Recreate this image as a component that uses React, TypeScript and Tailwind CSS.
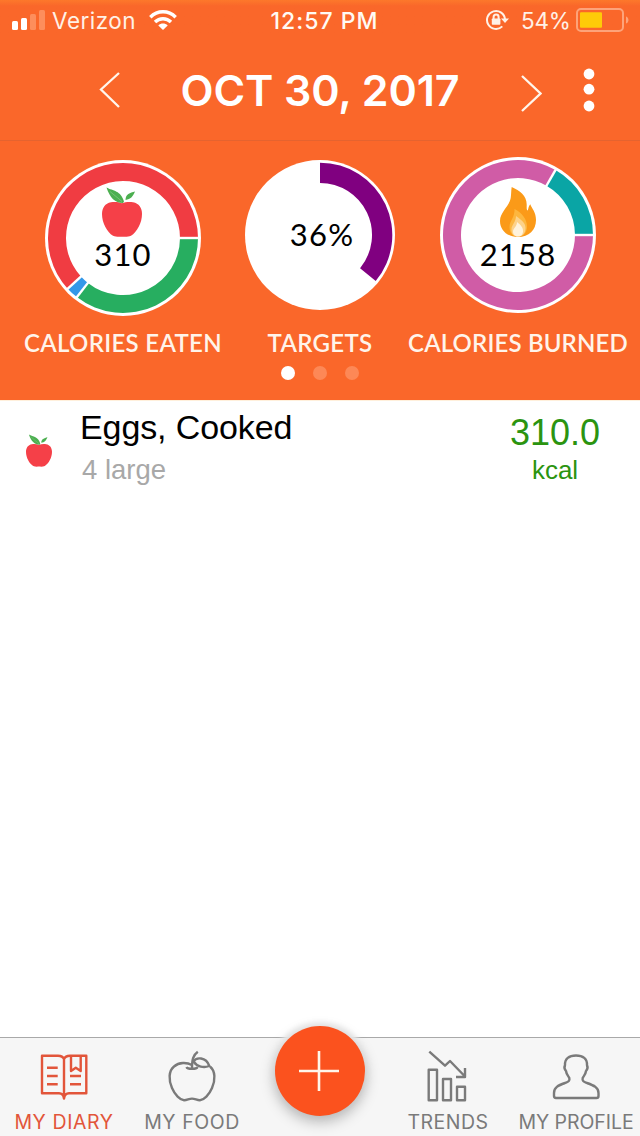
import type { ReactNode } from 'react';

type Segment = { from: number; to: number; color: string };

const eaten: Segment[] = [
  { from: 0, to: 128, color: '#27ae60' },
  { from: 128, to: 137.5, color: '#3498e8' },
  { from: 137.5, to: 360, color: '#f03c42' },
];

const burned: Segment[] = [
  { from: 0, to: 300, color: '#d05ca6' },
  { from: 300, to: 360, color: '#0aa5a5' },
];

const targets: Segment[] = [{ from: -90, to: 39.6, color: '#800080' }];

function point(c: number, r: number, deg: number) {
  const a = (deg * Math.PI) / 180;
  return `${c + r * Math.cos(a)} ${c + r * Math.sin(a)}`;
}

function Ring({ size, outer, inner, segments, gaps }: { size: number; outer: number; inner: number; segments: Segment[]; gaps?: boolean }) {
  const c = size / 2;
  return (
    <svg width={size} height={size} className="[grid-area:1/1]">
      <circle cx={c} cy={c} r={c} fill="#fff" />
      {segments.map((s) => {
        const large = s.to - s.from > 180 ? 1 : 0;
        return (
          <path
            key={s.from}
            fill={s.color}
            d={`M${point(c, outer, s.from)} A${outer} ${outer} 0 ${large} 1 ${point(c, outer, s.to)} L${point(c, inner, s.to)} A${inner} ${inner} 0 ${large} 0 ${point(c, inner, s.from)} Z`}
          />
        );
      })}
      {gaps &&
        segments.map((s) => (
          <path key={s.from} stroke="#fff" strokeWidth="2.4" d={`M${point(c, inner - 1, s.from)} L${point(c, outer + 1, s.from)}`} />
        ))}
    </svg>
  );
}

function Apple({ className }: { className: string }) {
  return (
    <svg viewBox="0 0 40 50" className={className}>
      <path fill="#f54048" d="M20 16.2C23 15 27 14.8 31 15.2C37 16.2 40 21 40 27C40 36 35 45 29 48.8C26 50.2 23 49.8 20 49.8S14 50.2 11 48.8C5 45 0 36 0 27C0 21 3 16.2 9 15.2C13 14.8 17 15 20 16.2Z" />
      <path fill="#4caf50" d="M4.5 0.5C11 4 19 3.5 22 14.5L21 16C13 16 8 11 4.5 0.5Z" />
      <path fill="#4caf50" d="M33 4.5C30.5 10 29 12 23.5 13C23.5 7 28 6 33 4.5Z" />
      <path stroke="#8fce8c" strokeWidth="0.6" fill="none" d="M8 4.5L20 14.5" />
    </svg>
  );
}

function Flame() {
  return (
    <svg viewBox="0 0 36 50" className="w-9 h-[50px]">
      <path fill="#fb9a18" d="M11.7 0C20 3.5 27 9 26.7 18C26.7 21 26.5 23 27.5 23.5C28.5 23 28 20 30.3 17.3C32 22 36 25 36 33C36 43 29 50 18 50S0 43 0 34C0 25 9 20 10.7 11C11.3 7.5 11 4 11.7 0Z" />
      <path fill="#fdb63e" d="M14.5 22C22 26 27 32 27 39.5C27 46 23 49.6 18 49.6S9.5 46 9.5 40C9.5 34 15 30 14.5 22Z" />
      <path fill="#fdd28a" d="M16 29C23 34 26 37 25.5 42C25 47 22 49.6 18 49.6S11 47 11.5 42C11.5 38 16 35 16 29Z" />
      <path fill="#fff3dc" d="M17 35C21 38 23.5 41 23 45C22.5 48 20.5 49.5 18 49.5S13 48 13 44.5C13 41 17 40 17 35Z" />
    </svg>
  );
}

function StatusBar() {
  return (
    <div className="flex h-10 items-center font-[Inter,sans-serif] text-[22.5px] leading-10 text-[#fff1e6] bg-linear-to-b from-[#fd782b] to-[#fa672a] to-15%">
      <div className="flex w-[262px] items-center pl-[11px]">
        <svg width="35" height="20" className="shrink-0">
          <rect x="1" y="11" width="6" height="9" rx="1.5" fill="#fff" />
          <rect x="10" y="8" width="6" height="12" rx="1.5" fill="#fff" />
          <rect x="19" y="4" width="6" height="16" rx="1.5" fill="#fd8e5c" />
          <rect x="28" y="0" width="6" height="20" rx="1.5" fill="#fd8e5c" />
        </svg>
        <span className="ml-[6px] w-[97px] pt-px tracking-[0.5px]">Verizon</span>
        <svg width="28" height="20" viewBox="0 0 28 20" fill="none" stroke="#fff" strokeWidth="3.4">
          <path d="M1.3 7.2C8.5 0 19.5 0 26.7 7.2" />
          <path d="M6 12C10.5 7.6 17.5 7.6 22 12" />
          <path d="M14 20L9.3 15.4C12 13 16 13 18.7 15.4Z" fill="#fff" stroke="none" />
        </svg>
      </div>
      <div className="w-[125px] pt-px text-center text-[23px] font-[550] tracking-[1px] whitespace-nowrap text-[#fffaf4]">12:57 PM</div>
      <div className="flex flex-1 items-center justify-end pr-[10px]">
        <svg width="24" height="22" viewBox="0 0 24 22" fill="none" stroke="#fff1e6" strokeWidth="2">
          <path d="M17.3 17.4A9 9 0 1 1 20 10.5" />
          <path d="M16 9.5H24L20 14Z" fill="#fff1e6" stroke="none" />
          <rect x="6.8" y="9.5" width="8.6" height="6.2" rx="0.8" fill="#fff1e6" stroke="none" />
          <path d="M8.6 10V8A2.5 2.5 0 0 1 13.6 8V10" />
        </svg>
        <span className="ml-[12px] w-[55px] pt-px tracking-[-0.2px]">54%</span>
        <svg width="54" height="24" viewBox="0 0 54 24">
          <rect x="1" y="1" width="46" height="22" rx="4" fill="none" stroke="#fda37a" strokeWidth="2" />
          <rect x="4" y="4.3" width="22" height="15.4" rx="1" fill="#fecb08" />
          <path d="M50 8.5C53.3 9.5 53.3 14.5 50 15.5Z" fill="#fda37a" />
        </svg>
      </div>
    </div>
  );
}

function DateNav() {
  return (
    <div className="flex h-[101px] items-start border-b border-[#e5632f] text-white">
      <svg width="22" height="38" className="ml-[98px] mt-[31px] shrink-0" fill="none" stroke="#fff6ec" strokeWidth="2.3">
        <path d="M21 2L3 18.5L21 36" />
      </svg>
      <h1 className="w-[400px] text-center font-[Inter,sans-serif] text-[43px] font-[560] leading-[100px] tracking-[-0.1px] whitespace-nowrap">
        OCT 30, 2017
      </h1>
      <svg width="22" height="38" className="mt-[35px] shrink-0" fill="none" stroke="#fff6ec" strokeWidth="2.3">
        <path d="M2 1L20.5 18.5L2 36" />
      </svg>
      <svg width="12" height="44" className="ml-[41px] mt-[28px] shrink-0" fill="#fff">
        <circle cx="6" cy="6" r="5.4" />
        <circle cx="6" cy="21.2" r="5.4" />
        <circle cx="6" cy="38" r="5.4" />
      </svg>
    </div>
  );
}

function Summary() {
  return (
    <div className="h-[259px] font-[Lato,sans-serif]">
      <div className="grid h-[180px] grid-cols-[246px_148px_246px] text-[31px] leading-[36px] text-black">
        <div className="grid content-start justify-items-center pt-[19px]">
          <Ring size={156} outer={75} inner={57} segments={eaten} gaps />
          <div className="[grid-area:1/1] flex flex-col items-center pt-[27px]">
            <Apple className="-ml-[2px] w-10 h-[50px]" />
            <span className="-mt-[1px] tracking-[1.2px]">310</span>
          </div>
        </div>
        <div className="grid w-[150px] -ml-px content-start justify-items-center pt-[19px]">
          <Ring size={150} outer={72.3} inner={52} segments={targets} />
          <span className="[grid-area:1/1] pl-[4px] pt-[56px] tracking-[1.2px]">36%</span>
        </div>
        <div className="grid content-start justify-items-center pl-[2px] pt-[16px]">
          <Ring size={156} outer={75} inner={57} segments={burned} gaps />
          <div className="[grid-area:1/1] flex flex-col items-center pt-[30px]">
            <Flame />
            <span className="-mt-[1px] tracking-[1.2px]">2158</span>
          </div>
        </div>
      </div>
      <div className="grid h-[42px] grid-cols-[246px_148px_246px] text-center text-[24px] font-semibold leading-[43px] tracking-[0.3px] whitespace-nowrap text-[#fff4ea]">
        <span>CALORIES EATEN</span>
        <span>TARGETS</span>
        <span className="pl-[2px] tracking-[0.15px]">CALORIES BURNED</span>
      </div>
      <div className="flex justify-center gap-[18px] pt-[3px]">
        <span className="size-[14px] rounded-full bg-white" />
        <span className="size-[14px] rounded-full bg-[#fd8856]" />
        <span className="size-[14px] rounded-full bg-[#fd8856]" />
      </div>
    </div>
  );
}

function FoodRow() {
  return (
    <div className="flex h-[96px] border-t border-[#fff0dc] font-['Liberation_Sans',Arial,sans-serif]">
      <Apple className="ml-[26px] mt-[33px] h-[33px] w-[26px]" />
      <div className="ml-[28px] flex-1 pt-[6px]">
        <p className="text-[34px] leading-10 tracking-[-0.1px] text-black">Eggs, Cooked</p>
        <p className="mt-[7px] pl-[2px] text-[27.5px] leading-8 text-[#a8a8a8]">4 large</p>
      </div>
      <div className="mr-[30px] w-[110px] pt-[12px] text-center text-[#2b9410]">
        <p className="text-[36px] leading-10">310.0</p>
        <p className="mt-px text-[26px] leading-8">kcal</p>
      </div>
    </div>
  );
}

function Tab({ label, className, children }: { label: string; className: string; children: ReactNode }) {
  return (
    <div className={`flex w-32 flex-col items-center pt-3 ${className}`}>
      <svg width="50" height="52" fill="none" stroke="currentColor" strokeWidth="2.4" strokeLinejoin="round">
        {children}
      </svg>
      <span className="mt-[8px] text-[19.5px] leading-6 whitespace-nowrap">{label}</span>
    </div>
  );
}

function TabBar() {
  return (
    <nav className="relative flex h-[99px] border-t border-[#a9a9a9] bg-[#f6f6f6] font-[Inter,sans-serif] text-[#7a7a7a]">
      <Tab label="MY DIARY" className="text-[#e2553a] tracking-[0.6px]">
        <path d="M25 9C24 6.5 22 5.7 19 5.7H3V43.3H20C23 43.3 24.5 45 25 48.5C25.5 45 27 43.3 30 43.3H47.3V5.7H31C28 5.7 26 6.5 25 9ZM25 9V46" />
        <path d="M8 17.7H18.7M8 26H18.7M8 34.3H18.7M31 26H42M31 34.3H42" />
        <path d="M32 6V21L36.8 17.8L41.7 21V6" />
      </Tab>
      <Tab label="MY FOOD" className="tracking-[0.55px]">
        <path d="M25 15C20 12.3 12 12 7 16.5C1.5 21 1.5 30 5 38C8 45 13 50 17 50.2C20 50.3 22 48.6 25 48.6S30 50.3 33 50.2C37 50 42 45 45 38C48.5 30 48.5 21 43 16.5" />
        <path d="M19.5 17C20.5 19.5 29.5 19.5 30.5 17M25 19C25 10 26 5 30.8 1.7" />
        <path d="M26.5 11.5C29 7 39 6.5 42.3 16C37 18 30 17 26.5 11.5Z" />
      </Tab>
      <div className="w-32" />
      <Tab label="TRENDS" className="tracking-[0.5px]">
        <path d="M6.3 1.7L22 15.7L27 11L42 26.5M33 27H42V18" />
        <path d="M5.7 19.7H14V50.3H5.7ZM20 29H28V50.3H20ZM34 36.7H42V50.3H34Z" />
      </Tab>
      <Tab label="MY PROFILE" className="tracking-[-0.05px]">
        <path d="M25 5.5C32 5.5 36.3 8.5 36 15C36.8 17 36.5 19.5 35 21C34.5 25 32.5 26 31.7 28C31 31 32.5 31.5 36 33C43 35.5 47.5 37.5 47.5 43V46C47.5 47.3 47 48 45.5 48H5C3.5 48 3 47.3 3 46V43C3 37.5 7 35.5 14 33C17.5 31.5 19 31 18.3 28C17.5 26 15.5 25 15 21C13.5 19.5 13.2 17 14 15C13.7 8.5 18 5.5 25 5.5Z" />
      </Tab>
      <button className="absolute left-[275px] -top-[12px] flex size-[90px] items-center justify-center rounded-full bg-[#fb521e] shadow-[0_5px_14px_1px_rgba(0,0,0,0.25),0_0_4px_5px_#f3f3f3]">
        <svg width="42" height="42" stroke="#fff6ea" strokeWidth="2.6" className="mr-[2px]">
          <path d="M1 21H41M21 1V41" />
        </svg>
      </button>
    </nav>
  );
}

export default function App() {
  return (
    <div className="flex h-[1136px] w-[640px] flex-col overflow-hidden bg-white">
      <header className="h-[400px] shrink-0 bg-[#fa672a]">
        <StatusBar />
        <DateNav />
        <Summary />
      </header>
      <main className="flex-1">
        <FoodRow />
      </main>
      <TabBar />
    </div>
  );
}
